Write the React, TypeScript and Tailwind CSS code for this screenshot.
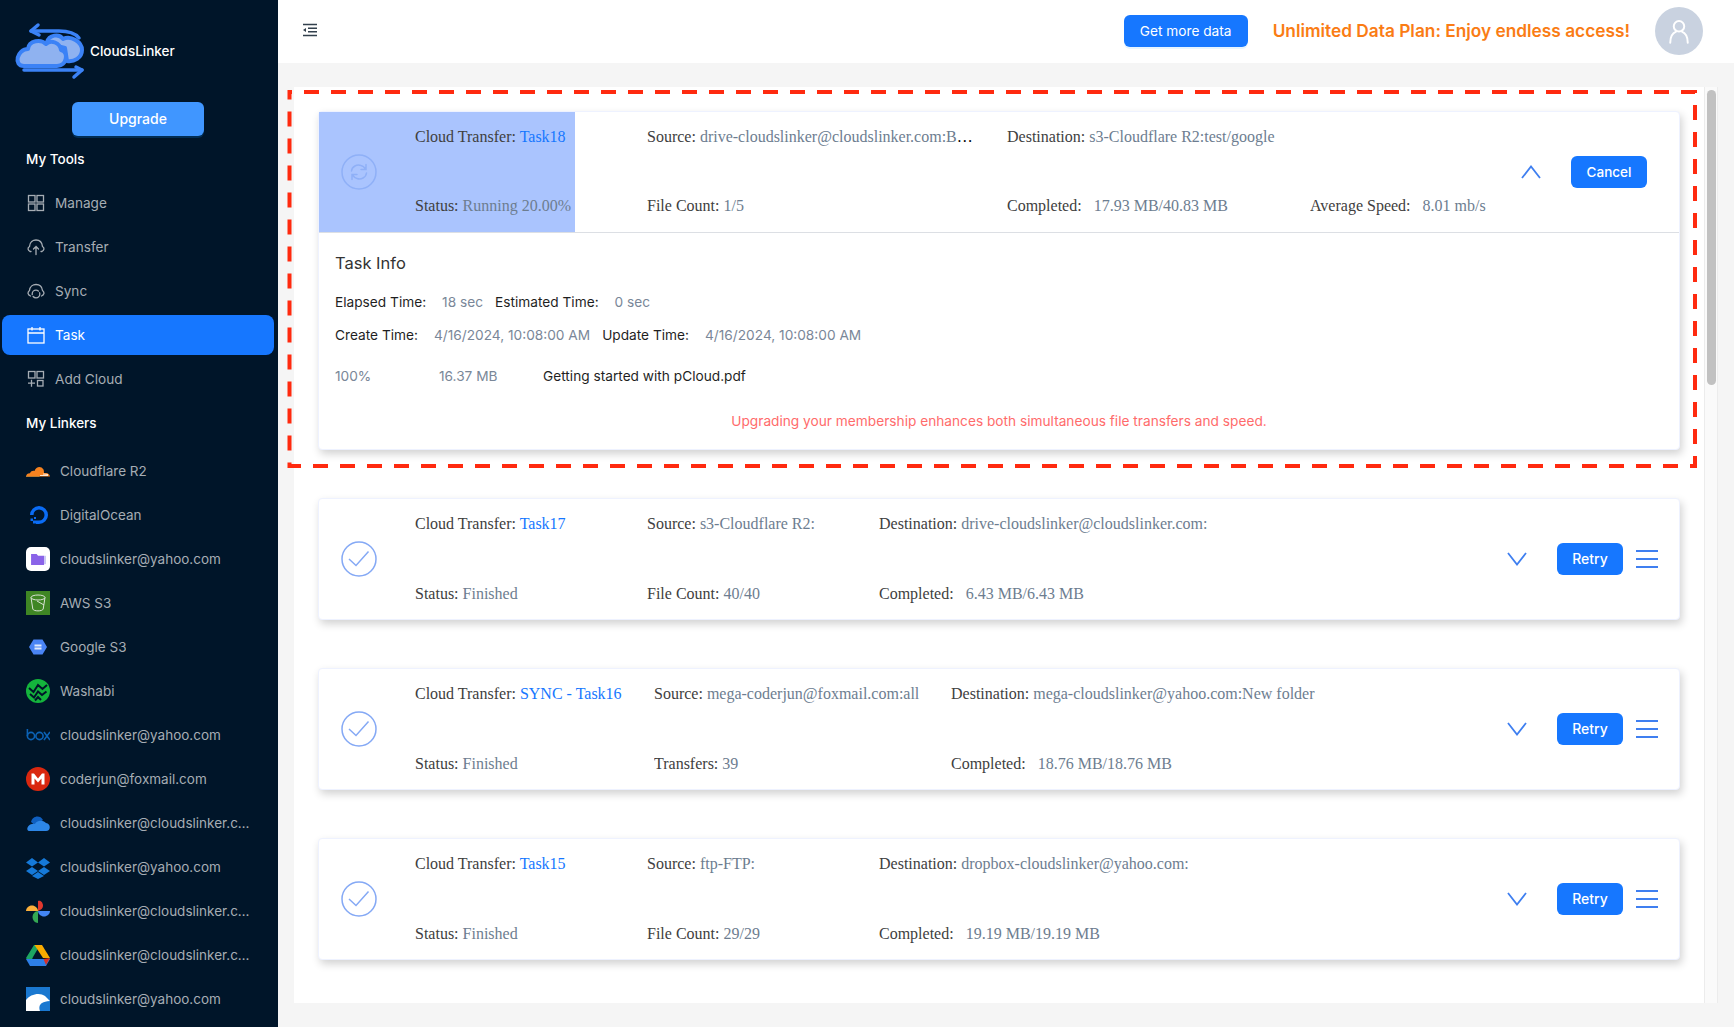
import type { ReactNode } from "react";

function CloudsLinkerLogo() {
	return (
		<svg viewBox="0 0 90 66" className="w-[90px] h-[66px] shrink-0" fill="none">
			<path d="M38 24C40 17 50 15 54 21C62 17 73 24 73 32C73 40 65 44 58 43L56 30L40 26Z" fill="#8fb2f0" stroke="#3b82f6" strokeWidth="4" strokeLinejoin="round" />
			<path d="M15 48H48C58 48 60 34 52 32C51 25 42 21 37 26C32 21 20 22 19 31C8 31 4 48 15 48Z" fill="#8fb2f0" stroke="#3b82f6" strokeWidth="4" strokeLinejoin="round" />
			<path d="M22 13H50C60 13 66 15 70 20" stroke="#3b82f6" strokeWidth="3.500" strokeLinecap="round" />
			<path d="M29 7L22 13L30 17" stroke="#3b82f6" strokeWidth="3.500" strokeLinecap="round" strokeLinejoin="round" />
			<path d="M15 52H73" stroke="#3b82f6" strokeWidth="3.500" strokeLinecap="round" />
			<path d="M65 59L73 52L67 49" stroke="#3b82f6" strokeWidth="3.500" strokeLinecap="round" strokeLinejoin="round" />
		</svg>
	);
}

const toolIcon = "w-[18px] h-[18px] shrink-0";

function ManageIcon() {
	return (
		<svg viewBox="0 0 18 18" className={toolIcon} fill="none" stroke="currentColor" strokeWidth="1.3">
			<rect x="1.5" y="1.5" width="6.5" height="6.5" />
			<rect x="10" y="1.5" width="6.5" height="6.5" />
			<rect x="1.5" y="10" width="6.5" height="6.5" />
			<rect x="10" y="10" width="6.5" height="6.5" />
		</svg>
	);
}

function TransferIcon() {
	return (
		<svg viewBox="0 0 18 18" className={toolIcon} fill="none" stroke="currentColor" strokeWidth="1.3" strokeLinecap="round">
			<path d="M4 13.5H3C1 12.5 0 10 2.5 8.5C2.8 4 6 2 9 2C12 2 15 4 15.5 8.5C18 10 17 12.5 15 13.5H14" />
			<path d="M9 16.5V8.5M6.5 11L9 8.5L11.5 11" />
		</svg>
	);
}

function SyncIcon() {
	return (
		<svg viewBox="0 0 18 18" className={toolIcon} fill="none" stroke="currentColor" strokeWidth="1.3" strokeLinecap="round">
			<path d="M3.5 14C1 13 0 10.5 2.5 8.5C2.8 4.5 6 2.5 9 2.5C12 2.5 15 4.5 15.5 8.5C18 10.5 17 13 14.5 14" />
			<circle cx="9" cy="12" r="3.8" strokeDasharray="9 2" />
		</svg>
	);
}

function TaskIcon() {
	return (
		<svg viewBox="0 0 18 18" className={toolIcon} fill="none" stroke="currentColor" strokeWidth="1.3">
			<rect x="1" y="3" width="16" height="14" />
			<path d="M1 7H17M5 1V4.5M13 1V4.5" />
		</svg>
	);
}

function AddCloudIcon() {
	return (
		<svg viewBox="0 0 18 18" className={toolIcon} fill="none" stroke="currentColor" strokeWidth="1.3">
			<rect x="1.5" y="1.5" width="6.5" height="6.5" />
			<rect x="10" y="1.5" width="6.5" height="6.5" />
			<rect x="10.5" y="10.5" width="5.5" height="5.5" />
			<path d="M1 13.2H8M4.5 9.8V16.8" />
		</svg>
	);
}

const tools = [
	{ label: "Manage", icon: <ManageIcon /> },
	{ label: "Transfer", icon: <TransferIcon /> },
	{ label: "Sync", icon: <SyncIcon /> },
	{ label: "Task", icon: <TaskIcon />, active: true },
	{ label: "Add Cloud", icon: <AddCloudIcon /> },
];

const logoBox = "w-6 h-6 shrink-0";

const linkers: { label: string; logo: ReactNode }[] = [
	{
		label: "Cloudflare R2",
		logo: (
			<svg viewBox="0 0 24 24" className={logoBox}>
				<path d="M0 17.500C.5 15 2 14 4 14.200C5 12 7 11.500 8.500 12C10 7.500 15 6.500 17.500 10.500C18 12 18 13 18 14H20C22 14 23.500 15.500 24 17.500Z" fill="#f6821f" />
				<path d="M14 16.500H22M17 15L22 15.500" stroke="#fff" strokeWidth=".8" />
				<path d="M0 17.500H14L13 18H0Z" fill="#fbad41" />
			</svg>
		),
	},
	{
		label: "DigitalOcean",
		logo: (
			<svg viewBox="0 0 24 24" className={logoBox}>
				<path d="M10 21H13A9 9 0 1 0 4 12H7.500A5.500 5.500 0 1 1 13 17.500H10Z" fill="#0a6cf5" />
				<rect x="7" y="17.500" width="3" height="3" fill="#0a6cf5" />
				<rect x="4.500" y="15.500" width="2.500" height="2.500" fill="#0a6cf5" />
				<rect x="8" y="14" width="2" height="2" fill="#0a6cf5" />
			</svg>
		),
	},
	{
		label: "cloudslinker@yahoo.com",
		logo: (
			<div className="w-6 h-6 shrink-0 rounded-[5px] bg-white flex items-center justify-center">
				<svg viewBox="0 0 16 14" className="w-[15px] h-[13px]">
					<path d="M0 1H6L7.500 3H14V13H0Z" fill="#8a63e8" />
					<rect x="14" y="3" width="2" height="9" fill="#c8c6f5" />
				</svg>
			</div>
		),
	},
	{
		label: "AWS S3",
		logo: (
			<div className="w-6 h-6 shrink-0 bg-[#3f8624] flex items-center justify-center">
				<svg viewBox="0 0 24 24" className="w-6 h-6" fill="none" stroke="#d9e2d4" strokeWidth="1">
					<ellipse cx="12" cy="6.500" rx="7" ry="2.500" />
					<path d="M5 6.500L6.800 18C7.500 20.500 16.500 20.500 17.200 18L19 6.500M11 10L18 14" />
				</svg>
			</div>
		),
	},
	{
		label: "Google S3",
		logo: (
			<svg viewBox="0 0 24 24" className={logoBox}>
				<path d="M3 12L7.500 4.500H16.500L21 12L16.500 19.500H7.500Z" fill="#4a84f5" />
				<rect x="8.500" y="9.500" width="7" height="2" fill="#dfe9fd" />
				<rect x="8.500" y="12.500" width="7" height="2" fill="#dfe9fd" />
			</svg>
		),
	},
	{
		label: "Washabi",
		logo: (
			<svg viewBox="0 0 24 24" className={logoBox} fill="none">
				<circle cx="12" cy="12" r="12" fill="#14b43c" />
				<path d="M3 9L7.500 13L12 6L16.500 10L21 6M4 15L8 18.500L12 12.500L16 16L20.500 12.500M9 21.500L12 18L15 21" stroke="#001529" strokeWidth="2" />
			</svg>
		),
	},
	{
		label: "cloudslinker@yahoo.com",
		logo: (
			<svg viewBox="0 0 24 24" className={logoBox} fill="none" stroke="#0b62b5" strokeWidth="1.600">
				<circle cx="5" cy="13" r="3.600" />
				<path d="M1.400 6V13" />
				<circle cx="13.500" cy="13" r="3.600" />
				<path d="M18 9L24 17M24 9L18 17" />
			</svg>
		),
	},
	{
		label: "coderjun@foxmail.com",
		logo: (
			<svg viewBox="0 0 24 24" className={logoBox}>
				<circle cx="12" cy="12" r="12" fill="#d9270f" />
				<path d="M5.500 17.500V6.500H8L12 11.500L16 6.500H18.500V17.500H15.500V11.500L12 15.500L8.500 11.500V17.500Z" fill="#fff" />
			</svg>
		),
	},
	{
		label: "cloudslinker@cloudslinker.com",
		logo: (
			<svg viewBox="0 0 24 24" className={logoBox}>
				<path d="M5 11C6 5 14 3 17 9L10 15Z" fill="#0f5fc0" />
				<path d="M4 20H20C25 20 25 12.500 20 12C16 8 10 10 9 13C3 11 -2 20 4 20Z" fill="#2d86e6" />
			</svg>
		),
	},
	{
		label: "cloudslinker@yahoo.com",
		logo: (
			<svg viewBox="0 0 24 24" className={logoBox} fill="#1579d8">
				<path d="M6 3L0 7.500L6 11.500L12 7.500Z" />
				<path d="M18 3L12 7.500L18 11.500L24 7.500Z" />
				<path d="M6 12L0 16L6 20L12 16Z" />
				<path d="M18 12L12 16L18 20L24 16Z" />
				<path d="M12 17L6 21L12 24L18 21Z" />
			</svg>
		),
	},
	{
		label: "cloudslinker@cloudslinker.com",
		logo: (
			<svg viewBox="0 0 24 24" className={logoBox}>
				<path d="M12 12V2C15 1 17 4 17 7C17 9 15 11 12 12Z" fill="#e0382e" />
				<path d="M12 12H24C24 15 21 17.500 18 17.500C15 17.500 12 15 12 12Z" fill="#4285f4" />
				<path d="M12 12V24C9 24 6.500 21 6.500 18C6.500 15 9 12 12 12Z" fill="#34a853" />
				<path d="M12 12H0C0 9 2.500 6.500 6 6.500C9 6.500 12 9 12 12Z" fill="#fbb03b" />
			</svg>
		),
	},
	{
		label: "cloudslinker@cloudslinker.com",
		logo: (
			<svg viewBox="0 0 24 24" className={logoBox}>
				<path d="M8 2H14L7 14L4 21L0 15Z" fill="#1da462" />
				<path d="M8.500 2H16L24 15H17Z" fill="#f9ab00" />
				<path d="M5 16H24L20 23H4L0 16Z" fill="#2d7fe8" />
				<path d="M24 15L20 22L17.500 16Z" fill="#d93025" />
			</svg>
		),
	},
	{
		label: "cloudslinker@yahoo.com",
		logo: (
			<svg viewBox="0 0 24 24" className={logoBox}>
				<rect width="24" height="24" fill="#1a78d0" />
				<path d="M0 24V13C4 7 14 5 19 9L24 14C20 14 18 15 16 16C13 18 13 21 14 24Z" fill="#fff" />
			</svg>
		),
	},
];

function Sidebar() {
	return (
		<aside className="w-[278px] h-[1027px] shrink-0 bg-[#001529] overflow-hidden flex flex-col">
			<div className="h-[102px] pt-[18px] pl-[9px] flex items-start">
				<CloudsLinkerLogo />
				<span className="text-[13.500px] font-medium text-white mt-[23px] -ml-[9px]">CloudsLinker</span>
			</div>
			<button className="w-[132px] h-[34px] ml-[72px] rounded-md bg-[#4096ff] text-sm font-medium text-white shadow-[0_2px_0_rgba(5,145,255,0.2)]">
				Upgrade
			</button>
			<div className="h-10 mt-[3px] pl-[26px] flex items-center text-[13.500px] font-medium text-white">My Tools</div>
			{tools.map((tool) => (
				<div
					key={tool.label}
					className={
						tool.active
							? "h-10 mt-1 ml-0.5 mr-1 pl-[25px] rounded-lg bg-[#1677ff] text-white flex items-center gap-[10px] text-[13.600px]"
							: "h-10 mt-1 ml-0.5 mr-1 pl-[25px] text-[#a6adb4] flex items-center gap-[10px] text-[13.600px]"
					}
				>
					{tool.icon}
					<span>{tool.label}</span>
				</div>
			))}
			<div className="h-10 mt-1 pl-[26px] flex items-center text-[13.500px] font-medium text-white">My Linkers</div>
			<div className="mt-[6px] flex flex-col">
				{linkers.map((linker, i) => (
					<div key={i} className="h-11 pl-[26px] pr-[21px] flex items-center gap-[10px] text-[13.500px] text-[#a6adb4]">
						{linker.logo}
						<span className="truncate">{linker.label}</span>
					</div>
				))}
			</div>
		</aside>
	);
}

function Header() {
	return (
		<header className="h-[63px] shrink-0 bg-white flex items-center pl-6 pr-[31px] pb-px">
			<svg viewBox="0 0 16 14" className="w-4 h-[14px] shrink-0 mb-[3px]" fill="none" stroke="#33404d" strokeWidth="1.400">
				<path d="M1 1.500H15M6 5.200H15M6 8.800H15M1 12.500H15" />
				<path d="M1 7L4 5V9Z" fill="#33404d" stroke="none" />
			</svg>
			<button className="ml-auto w-[124px] h-8 rounded-md bg-[#1677ff] text-[13.700px] text-white shadow-[0_2px_0_rgba(5,145,255,0.1)]">
				Get more data
			</button>
			<span className="ml-[25px] text-[17.300px] font-semibold text-[#fa7c14] whitespace-nowrap">
				Unlimited Data Plan: Enjoy endless access!
			</span>
			<div className="ml-[25px] w-12 h-12 rounded-full bg-[#c9d2e0] flex items-center justify-center">
				<svg viewBox="0 0 24 24" className="w-7 h-7" fill="none" stroke="#fff" strokeWidth="1.700" strokeLinecap="round">
					<circle cx="12" cy="8" r="4.500" />
					<path d="M4.500 22C4.500 16.500 7 13.500 9.500 12.500M19.500 22C19.500 16.500 17 13.500 14.500 12.500" />
				</svg>
			</div>
		</header>
	);
}

function Pair({ label, value, gap }: { label: string; value: ReactNode; gap?: boolean }) {
	return (
		<div className="truncate">
			<span className="text-[#404040]">{label}</span>{" "}
			<span className={gap ? "ml-2 text-[#6d7d90]" : "text-[#6d7d90]"}>{value}</span>
		</div>
	);
}

function TaskName({ name }: { name: string }) {
	return (
		<div>
			<span className="text-[#404040]">Cloud Transfer:</span> <span className="text-[#1677ff]">{name}</span>
		</div>
	);
}

function StatusIcon({ running }: { running?: boolean }) {
	if (running) {
		return (
			<svg viewBox="0 0 36 36" className="w-9 h-9 shrink-0 relative" fill="none" stroke="#8fb0f7" strokeWidth="1.500" strokeLinecap="round">
				<circle cx="18" cy="18" r="17" />
				<path d="M10.500 17C11 12.500 16 10 20 11.500C22 12 23.500 13.500 24.500 15M25 10.500V15.500H20" />
				<path d="M25.500 19C25 23.500 20 26 16 24.500C14 24 12.500 22.500 11.500 21M11 25.500V20.500H16" />
			</svg>
		);
	}
	return (
		<svg viewBox="0 0 36 36" className="w-9 h-9 shrink-0 relative" fill="none" stroke="#85a9f5" strokeWidth="1.500">
			<circle cx="18" cy="18" r="17" />
			<path d="M8 18L15 24.500L27.500 10.500" />
		</svg>
	);
}

function Chevron({ up }: { up?: boolean }) {
	return (
		<svg viewBox="0 0 20 14" className="w-5 h-[14px] shrink-0" fill="none" stroke="#3f7ff0" strokeWidth="1.800">
			<path d={up ? "M1 13L10 1.500L19 13" : "M1 1L10 12.500L19 1"} />
		</svg>
	);
}

function MenuLines() {
	return (
		<svg viewBox="0 0 22 18" className="w-[22px] h-[18px] shrink-0 ml-[13px]" fill="none" stroke="#3f7ff0" strokeWidth="1.800">
			<path d="M0 1H22M0 9H22M0 17H22" />
		</svg>
	);
}

type Job = {
	name: string;
	source: string;
	destination: string;
	countLabel: string;
	count: string;
	completed: string;
	col1: string;
	col2: string;
};

const finished: Job[] = [
	{
		name: "Task17",
		source: "s3-Cloudflare R2:",
		destination: "drive-cloudslinker@cloudslinker.com:",
		countLabel: "File Count:",
		count: "40/40",
		completed: "6.43 MB/6.43 MB",
		col1: "w-[232px]",
		col2: "w-[232px]",
	},
	{
		name: "SYNC - Task16",
		source: "mega-coderjun@foxmail.com:all",
		destination: "mega-cloudslinker@yahoo.com:New folder",
		countLabel: "Transfers:",
		count: "39",
		completed: "18.76 MB/18.76 MB",
		col1: "w-[239px]",
		col2: "w-[297px]",
	},
	{
		name: "Task15",
		source: "ftp-FTP:",
		destination: "dropbox-cloudslinker@yahoo.com:",
		countLabel: "File Count:",
		count: "29/29",
		completed: "19.19 MB/19.19 MB",
		col1: "w-[232px]",
		col2: "w-[232px]",
	},
];

const cardText = "font-['Liberation_Serif',serif] text-base";

function FinishedCard({ job }: { job: Job }) {
	return (
		<article className="h-[122px] rounded-[4px] bg-white border border-[#eef2ff] shadow-[2px_4px_8px_rgba(0,0,0,0.18)] pl-[22px] flex items-center">
			<StatusIcon />
			<div className={`${cardText} ml-[38px] h-full flex`}>
				<div className={`${job.col1} pt-[13px] pb-[13px] flex flex-col justify-between`}>
					<TaskName name={job.name} />
					<Pair label="Status:" value="Finished" />
				</div>
				<div className={`${job.col2} pt-[13px] pb-[13px] flex flex-col justify-between`}>
					<Pair label="Source:" value={job.source} />
					<Pair label={job.countLabel} value={job.count} />
				</div>
				<div className="pt-[13px] pb-[13px] flex flex-col justify-between">
					<Pair label="Destination:" value={job.destination} />
					<Pair label="Completed:" value={job.completed} gap />
				</div>
			</div>
			<div className="ml-auto pr-[21px] flex items-center">
				<Chevron />
				<button className="ml-[30px] w-[66px] h-8 rounded-md bg-[#1677ff] text-sm font-medium text-white font-['Inter',sans-serif]">Retry</button>
				<MenuLines />
			</div>
		</article>
	);
}

function RunningCard() {
	return (
		<article className="h-[339px] rounded-[4px] bg-white border border-[#eef2ff] shadow-[2px_4px_8px_rgba(0,0,0,0.18)] flex flex-col">
			<div className="relative h-[121px] shrink-0 border-b border-[#dcdfe4] pl-[22px] flex items-center">
				{/* progress fill, 20% running */}
				<div className="absolute left-0 top-0 bottom-0 w-[256px] bg-[#aac4fe]" />
				<StatusIcon running />
				<div className={`${cardText} relative ml-[38px] h-full flex`}>
					<div className="w-[232px] pt-[13px] pb-[14px] flex flex-col justify-between">
						<TaskName name="Task18" />
						<Pair label="Status:" value="Running 20.00%" />
					</div>
					<div className="w-[360px] pt-[13px] pb-[14px] flex flex-col justify-between">
						<div className="w-[327px]">
							<Pair label="Source:" value="drive-cloudslinker@cloudslinker.com:Backup" />
						</div>
						<Pair label="File Count:" value="1/5" />
					</div>
					<div className="w-[303px] pt-[13px] pb-[14px] flex flex-col justify-between">
						<Pair label="Destination:" value="s3-Cloudflare R2:test/google" />
						<Pair label="Completed:" value="17.93 MB/40.83 MB" gap />
					</div>
					<div className="pt-[13px] pb-[14px] flex flex-col justify-end">
						<Pair label="Average Speed:" value="8.01 mb/s" gap />
					</div>
				</div>
				<div className="ml-auto pr-[32px] flex items-center">
					<Chevron up />
					<button className="ml-[30px] w-[76px] h-8 rounded-md bg-[#1677ff] text-[13.500px] font-medium text-white font-['Inter',sans-serif]">Cancel</button>
				</div>
			</div>
			<div className="px-4 text-[13.700px] text-[#1f1f1f] flex flex-col">
				<h2 className="mt-4 h-7 leading-7 text-[16.500px] text-[#333]">Task Info</h2>
				<div className="mt-[15px] h-5 leading-5 flex whitespace-nowrap">
					<span>Elapsed Time:</span>
					<span className="ml-4 text-[#7a8798]">18 sec</span>
					<span className="ml-3">Estimated Time:</span>
					<span className="ml-4 text-[#7a8798]">0 sec</span>
				</div>
				<div className="mt-[13px] h-5 leading-5 flex whitespace-nowrap">
					<span>Create Time:</span>
					<span className="ml-4 text-[#7a8798]">4/16/2024, 10:08:00 AM</span>
					<span className="ml-3">Update Time:</span>
					<span className="ml-4 text-[#7a8798]">4/16/2024, 10:08:00 AM</span>
				</div>
				<div className="mt-[21px] h-5 leading-5 flex whitespace-nowrap">
					<span className="w-[104px] text-[#7a8798]">100%</span>
					<span className="w-[104px] text-[#7a8798]">16.37 MB</span>
					<span>Getting started with pCloud.pdf</span>
				</div>
				<p className="mt-[25px] h-5 leading-5 text-center text-[#ff6b6b]">
					Upgrading your membership enhances both simultaneous file transfers and speed.
				</p>
			</div>
		</article>
	);
}

export default function App() {
	return (
		<div className="w-[1734px] h-[1027px] overflow-hidden flex bg-[#f5f5f5] font-['Inter',sans-serif]">
			<Sidebar />
			<main className="flex-1 min-w-0 flex flex-col">
				<Header />
				<div className="relative mt-6 ml-4 mr-4 h-[916px] flex">
					{/* red dashed marker drawn over the first card */}
					<svg className="absolute left-[-8px] top-0 z-10 w-[1420px] h-[384px] pointer-events-none" fill="none">
						<rect x="3.500" y="5" width="1405.500" height="374" stroke="#ff2a0f" strokeWidth="4" strokeDasharray="15 12" strokeDashoffset="-14.500" />
					</svg>
					<div className="w-[1410px] h-full bg-white overflow-hidden pt-6 pl-6 pr-6 flex flex-col gap-12">
						<RunningCard />
						{finished.map((job) => (
							<FinishedCard key={job.name} job={job} />
						))}
					</div>
					<div className="w-[14px] h-full bg-[#fafafa] border-x border-[#ececec] pt-[3px] flex justify-center">
						<div className="w-[9px] h-[295px] rounded-full bg-[#c1c1c1]" />
					</div>
				</div>
			</main>
		</div>
	);
}
